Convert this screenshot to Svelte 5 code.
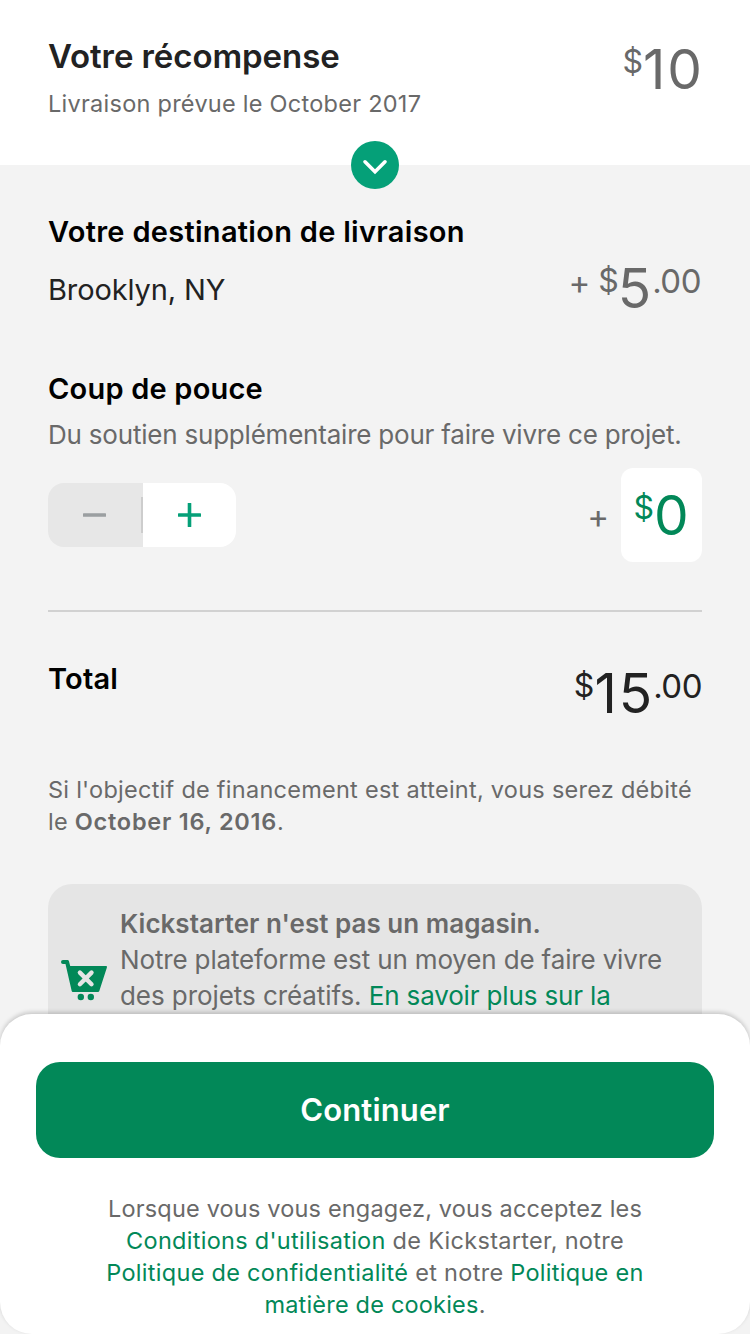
<script>
  const reward = { whole: '10' };
  const shipping = { whole: '5', cents: '.00' };
  const bonus = { whole: '0' };
  const total = { whole: '15', cents: '.00' };
</script>

{#snippet price(p)}
  <span class="price">
    <span class="small">$</span><span class="whole">{p.whole}</span>{#if p.cents}<span class="small cents">{p.cents}</span>{/if}
  </span>
{/snippet}

<div class="screen">
  <header>
    <div>
      <h1>Votre récompense</h1>
      <p class="delivery">Livraison prévue le October 2017</p>
    </div>
    <div class="reward-price">{@render price(reward)}</div>
    <button class="expand" aria-label="Développer">
      <svg width="48" height="48" viewBox="0 0 48 48" fill="none">
        <path d="M14 20.800 24 30.700 34 20.800" stroke="#fff" stroke-width="3.600" stroke-linecap="round" />
      </svg>
    </button>
  </header>

  <main>
    <section class="shipping">
      <div>
        <h2 class="dest">Votre destination de livraison</h2>
        <p class="place">Brooklyn, NY</p>
      </div>
      <div class="amount">
        <span class="plus">+</span>
        {@render price(shipping)}
      </div>
    </section>

    <section class="bonus">
      <h2>Coup de pouce</h2>
      <p class="support">Du soutien supplémentaire pour faire vivre ce projet.</p>
      <div class="row">
        <div class="stepper">
          <button class="minus" aria-label="Moins">
            <svg width="25" height="26" viewBox="0 0 25 26"><rect x="1" y="11.200" width="23" height="3.600" rx="0.600" fill="#9b9fa1" /></svg>
          </button>
          <button class="add" aria-label="Plus">
            <svg width="25" height="26" viewBox="0 0 25 26" fill="#05a078"><rect x="1" y="11.200" width="23" height="3.600" rx="0.600" /><rect x="10.700" y="1" width="3.600" height="24" rx="0.600" /></svg>
          </button>
        </div>
        <div class="amount">
          <span class="plus">+</span>
          <span class="field">{@render price(bonus)}</span>
        </div>
      </div>
    </section>

    <section class="total">
      <h2>Total</h2>
      {@render price(total)}
    </section>

    <p class="note">
      Si l'objectif de financement est atteint, vous serez débité<br />
      le <b>October 16, 2016</b>.
    </p>

    <aside>
      <svg class="cart" width="48" height="42" viewBox="0 0 48 42">
        <path d="M3 0H7.500Q8.600 0 8.900 1L10.200 6H46Q47.400 6 46.900 7.400L39.300 31Q39 32 38 32H12.800Q11.900 32 11.700 31L5.500 4H3A2 2 0 0 1 3 0Z" fill="#028858" />
        <path d="M19.900 12.600 31.500 24.200M31.500 12.600 19.900 24.200" stroke="#e5e5e5" stroke-width="4.400" stroke-linecap="round" />
        <circle cx="20.800" cy="37" r="3.200" fill="#028858" />
        <circle cx="30.800" cy="37" r="3.200" fill="#028858" />
      </svg>
      <p>
        <b>Kickstarter n'est pas un magasin.</b><br />
        Notre plateforme est un moyen de faire vivre<br />
        <span class="projects">des projets créatifs.</span> <a href="#more">En savoir plus sur la</a>
      </p>
    </aside>
  </main>

  <footer>
    <button class="continue">Continuer</button>
    <p class="legal">
      <span class="first">Lorsque vous vous engagez, vous acceptez les</span><br />
      <a href="#terms">Conditions d'utilisation</a> de Kickstarter, notre<br />
      <a href="#privacy">Politique de confidentialité</a> et notre <a href="#cookies">Politique en</a><br />
      <span class="last"><a href="#cookies">matière de cookies</a>.</span>
    </p>
  </footer>
</div>

<style>
  :global(body) { margin: 0; background: #f3f3f3; }
  .screen {
    box-sizing: border-box;
    width: 750px;
    height: 1334px;
    overflow: hidden;
    display: flex;
    flex-direction: column;
    background: #f3f3f3;
    color: #696969;
    font-family: Inter, "Liberation Sans", sans-serif;
  }
  h1, h2, p { margin: 0; white-space: nowrap; }
  a { color: #028858; text-decoration: none; }
  b { font-weight: 600; }
  button { border: 0; padding: 0; font: inherit; }

  header {
    position: relative;
    flex: none;
    box-sizing: border-box;
    height: 165px;
    padding: 36px 49px 0 48px;
    display: flex;
    justify-content: space-between;
    background: #fff;
  }
  h1 { font-size: 33px; line-height: 40px; font-weight: 600; color: #222; letter-spacing: -0.080px; }
  .delivery { margin-top: 12px; font-size: 23.5px; line-height: 32px; letter-spacing: 0.260px; }
  .reward-price { padding-top: 5px; }
  .expand {
    position: absolute;
    left: 351px;
    bottom: -24px;
    width: 48px;
    height: 48px;
    border-radius: 50%;
    background: #05a078;
  }
  .expand svg { display: block; }

  .price { display: flex; align-items: flex-start; }
  .whole { font-size: 55px; line-height: 56px; letter-spacing: 2px; margin-right: -3px; }
  .small { font-size: 32px; line-height: 42px; }
  .cents { font-size: 33px; line-height: 42px; letter-spacing: -0.500px; margin-left: 2px; }

  main { flex: 1; min-height: 0; padding: 0 48px; overflow: hidden; }
  h2 { font-size: 29px; line-height: 40px; font-weight: 600; color: #000; letter-spacing: 0.200px; }
  .dest { letter-spacing: 0.290px; }
  .amount { display: flex; }
  .plus { font-size: 33px; line-height: 44px; }

  .shipping { display: flex; justify-content: space-between; padding-top: 47px; }
  .place { margin-top: 18px; font-size: 29px; line-height: 40px; color: #222; letter-spacing: -0.120px; }
  .shipping .amount { padding: 48px 1px 0 0; gap: 8px; }
  .shipping .small:first-child { margin-right: -1px; }

  .bonus { padding: 53px 0 48px; border-bottom: 2px solid #d1d1d1; }
  .support { margin-top: 8px; font-size: 26px; line-height: 36px; letter-spacing: -0.210px; }
  .row { display: flex; align-items: center; justify-content: space-between; margin-top: 15px; height: 94px; }
  .stepper { display: flex; width: 188px; height: 64px; border-radius: 16px; overflow: hidden; }
  .stepper button { display: grid; place-items: center; box-sizing: border-box; }
  .minus { width: 95px; padding-right: 2px; background: linear-gradient(#cdcdcd, #cdcdcd) right center / 2px 36px no-repeat, #e7e7e7; }
  .add { flex: 1; background: #fff; }
  .row .amount { align-items: center; gap: 12px; }
  .row .plus { padding-top: 2px; }
  .field {
    box-sizing: border-box;
    width: 81px;
    height: 94px;
    padding: 19px 2px 0 0;
    display: flex;
    justify-content: center;
    border-radius: 12px;
    background: #fff;
    color: #028858;
  }

  .total { display: flex; justify-content: space-between; padding-top: 47px; }
  .total .price { color: #222; margin-top: 6px; }

  .note { margin-top: 53px; font-size: 23.5px; line-height: 32px; letter-spacing: 0.260px; }
  .note b { letter-spacing: 0.750px; }
  aside {
    display: flex;
    align-items: flex-start;
    box-sizing: border-box;
    height: 190px;
    margin-top: 46px;
    padding: 22px 12px;
    gap: 12px;
    border-radius: 24px;
    background: #e5e5e5;
  }
  .cart { flex: none; margin-top: 54px; }
  aside p { font-size: 26px; line-height: 36px; letter-spacing: -0.150px; }
  aside b { letter-spacing: 0.020px; }
  .projects { letter-spacing: -0.070px; }

  footer {
    position: relative;
    flex: none;
    box-sizing: border-box;
    height: 320px;
    padding: 48px 36px 0;
    border-radius: 32px;
    background: #fff;
    box-shadow: 0 -2px 4px rgba(0, 0, 0, 0.18);
    text-align: center;
  }
  .continue {
    display: block;
    width: 100%;
    height: 96px;
    padding-bottom: 2px;
    border-radius: 24px;
    background: #028858;
    color: #fff;
    font-size: 31px;
    font-weight: 600;
    letter-spacing: 0.150px;
  }
  .legal { margin-top: 35px; font-size: 23.5px; line-height: 32px; letter-spacing: 0.290px; }
  .first { letter-spacing: 0.180px; }
  .last { letter-spacing: 0.200px; }
</style>
